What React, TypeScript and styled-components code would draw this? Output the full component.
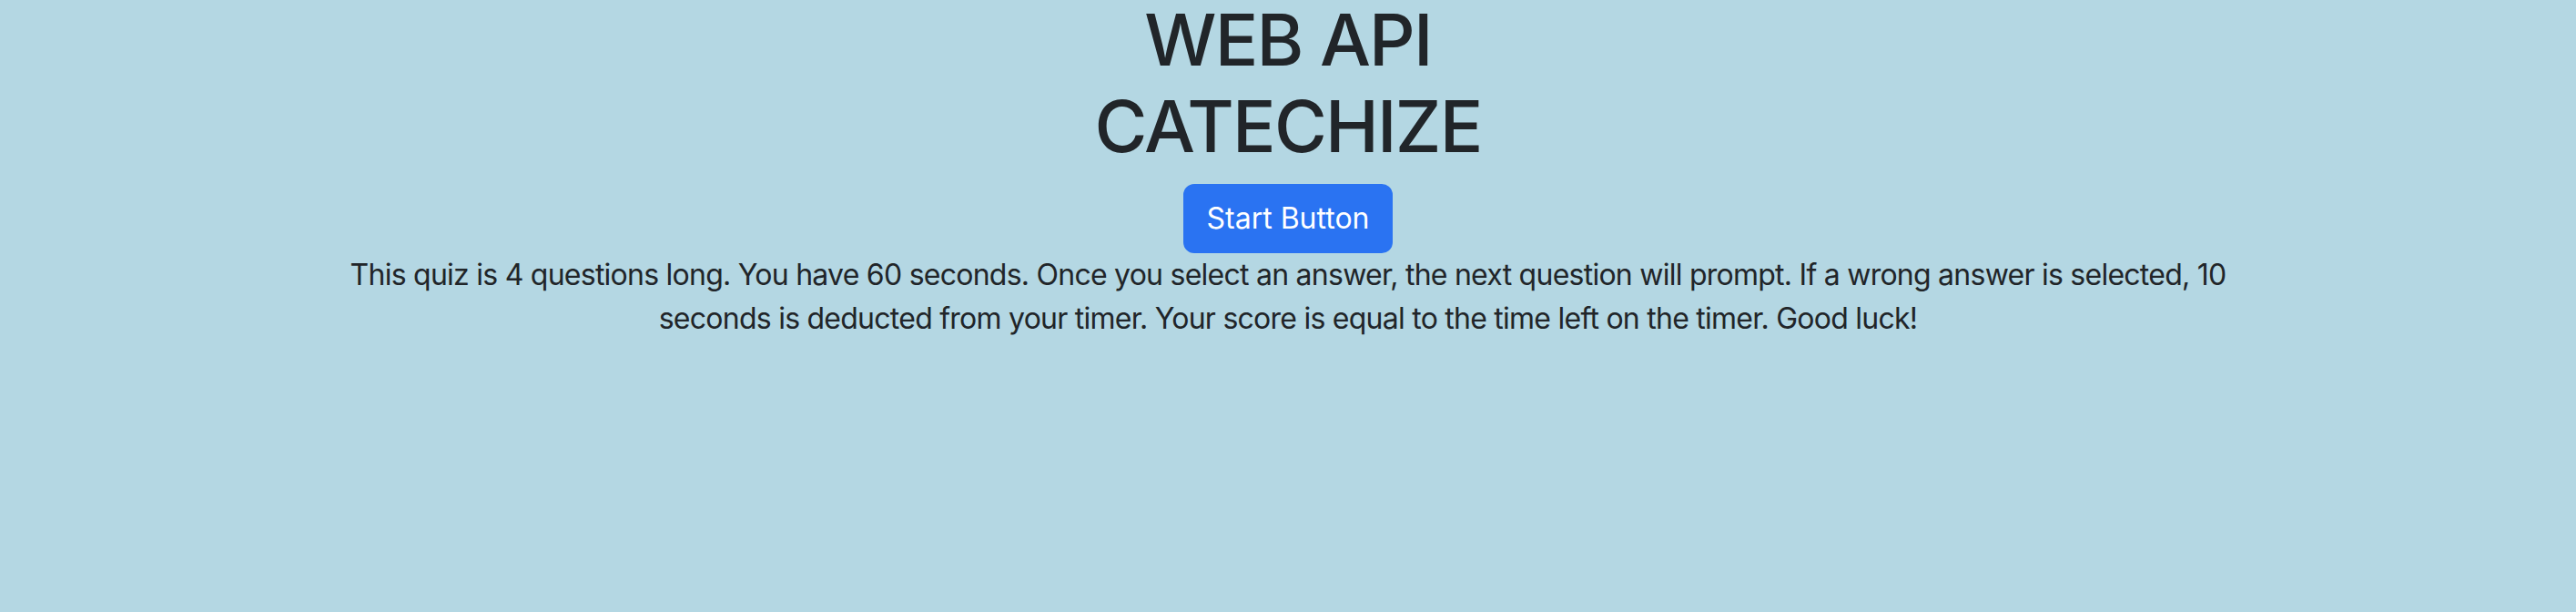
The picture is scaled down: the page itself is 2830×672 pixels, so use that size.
import React from 'react';
import styled, { createGlobalStyle } from 'styled-components';

const GlobalStyle = createGlobalStyle`
  html, body {
    margin: 0;
    padding: 0;
    background-color: #b4d7e3;
  }
  body {
    font-family: Inter, 'Noto Sans', 'Liberation Sans', sans-serif;
    color: #212529;
    -webkit-font-smoothing: antialiased;
  }
  #root {
    min-height: 672px;
  }
`;

const Page = styled.main`
  display: flex;
  flex-direction: column;
  align-items: center;
  text-align: center;
  min-height: 672px;
`;

const Title = styled.h1`
  margin: -4px 0 16px;
  font-size: 79px;
  line-height: 95px;
  font-weight: 500;
  letter-spacing: -1.8px;
`;

const StartButton = styled.button`
  font-family: inherit;
  font-size: 32px;
  line-height: 48px;
  padding: 12px 24px;
  border: 2px solid #2a73f2;
  border-radius: 12px;
  background-color: #2a73f2;
  color: #ffffff;
  cursor: pointer;
  &:hover {
    background-color: #1f66e0;
  }
`;

const Intro = styled.p`
  margin: 0;
  max-width: 2120px;
  font-size: 32px;
  line-height: 48px;
  letter-spacing: -0.75px;
`;

export default function App() {
  return (
    <>
      <GlobalStyle />
      <Page>
        <Title>
          WEB API
          <br />
          CATECHIZE
        </Title>
        <StartButton type='button'>Start Button</StartButton>
        <Intro>
          This quiz is 4 questions long. You have 60 seconds. Once you select an answer, the next question will prompt. If a wrong
          answer is selected, 10 seconds is deducted from your timer. Your score is equal to the time left on the timer. Good luck!
        </Intro>
      </Page>
    </>
  );
}
